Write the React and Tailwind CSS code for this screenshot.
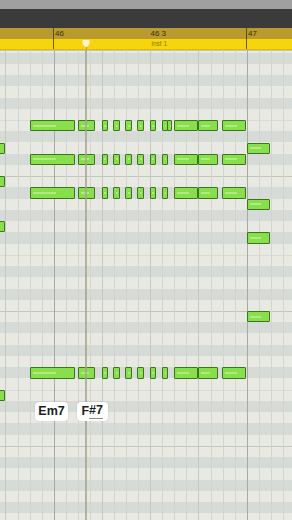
import React from "react";

const H = 11.24;
const rowTop = (n) => 396 - n * H;
const DARK = [1, 3, 6, 8, 10];

const rows = [];
for (let n = 36; n >= -6; n--) {
  const pc = (((n - 1) % 12) + 12) % 12;
  rows.push({ n, pc, first: n === 36 });
}

const cols = [];
for (let k = -4; k <= 19; k++) cols.push(k);

const common = [
  [29.5, 75],
  [78, 95],
  [101.5, 107.5],
  [113, 119.5],
  [125, 131.5],
  [137, 143.5],
  [149.5, 155.5],
  [162, 167.5],
  [173.5, 197.5],
  [197.5, 217.5],
  [222, 245.5],
];

const notes = [];
[29, 26, 23, 7].forEach((n) => {
  common.forEach(([a, b]) => notes.push({ n, a, b }));
});
notes.push({ n: 29, a: 167, b: 172 });
[27, 22, 19, 12].forEach((n) => notes.push({ n, a: 246.5, b: 270 }));
[27, 24, 20, 5].forEach((n) => notes.push({ n, a: -20, b: 5.3 }));

function Note({ n, a, b }) {
  const w = b - a;
  const lw = Math.max(1, (w - 2) * 0.55);
  return (
    <div
      className="absolute bg-[#88df4b] border border-[#3a7620] rounded-[1px]"
      style={{ left: a, top: rowTop(n), width: w, height: H }}
    >
      <div
        className="absolute top-1/2 -translate-y-1/2 h-px bg-[#d8f8b9]"
        style={{ left: w > 8 ? 2 : 1.5, width: lw }}
      />
    </div>
  );
}

export default function App() {
  return (
    <div className="w-[292px] h-[520px] overflow-hidden flex flex-col bg-[#e7e9e2] font-['Liberation_Sans',Arial,sans-serif]">
      <div className="h-[9px] bg-[#a0a0a0]" />
      <div className="h-[19px] bg-[#3b3b3b]" />
      <div className="h-[11px] bg-[#b89a2e] flex text-[8px] leading-none text-[#3a300a]">
        <div className="w-[53px] shrink-0" />
        <div className="w-[193px] shrink-0 border-l border-[#5e4d12] grid grid-cols-2 pt-[2px]">
          <span className="pl-[1px]">46</span>
          <span className="pl-[0.5px]">46 3</span>
        </div>
        <div className="flex-1 border-l border-[#5e4d12] pt-[2px] pl-[1px]">47</div>
      </div>
      <div className="h-[11px] bg-[#f7d50c] relative flex border-b border-[#d9b90a]">
        <div className="w-[53px] shrink-0" />
        <div className="w-[193px] shrink-0 border-l border-[#6b5a12] grid grid-cols-2 pt-[2px]">
          <span />
          <span className="pl-[1.5px] text-[6.5px] leading-none text-[#8c7608]">inst 1</span>
        </div>
        <div className="flex-1 border-l border-[#6b5a12]" />
        <svg className="absolute left-[82px] top-[1px]" width="8" height="8" viewBox="0 0 8 8">
          <path d="M0.5 1 Q0.5 0 1.5 0 H6.5 Q7.5 0 7.5 1 V4 L4 7.8 L0.5 4 Z" fill="#fff5cc" />
        </svg>
        <div className="absolute left-[85.5px] top-[8px] bottom-0 w-px bg-[#a89a5a]" />
      </div>
      <div className="flex-1 relative overflow-hidden">
        <div className="flex flex-col">
          {rows.map((r) => {
            const dark = DARK.includes(r.pc);
            const h = r.first ? "h-[2.6px]" : "h-[11.24px]";
            const bg = dark ? "bg-[#d7dbd8]" : "bg-[#e8e9e2]";
            const line =
              r.pc === 11
                ? "border-t border-[#c3c6c0]"
                : r.pc === 4
                ? "border-t border-[#d9dbd4]"
                : "";
            return <div key={r.n} className={`${h} ${bg} ${line} shrink-0`} />;
          })}
        </div>
        <div className="absolute inset-0 flex">
          <div className="w-[5.45px] shrink-0" />
          {cols.map((k) => {
            const cls =
              k % 16 === 0
                ? "border-l border-[#a7aaa3]"
                : k % 4 === 0
                ? "border-l border-[#c6c9c2]"
                : "border-l border-[#d2d5ce]";
            return <div key={k} className={`w-[12.0625px] shrink-0 ${cls}`} />;
          })}
        </div>
        {notes.map((nt, i) => (
          <Note key={i} {...nt} />
        ))}
        <div className="absolute left-[85px] top-0 bottom-0 w-[2px] bg-[#a9a28e]/80" />
        <div className="absolute left-[35px] top-[352px] flex gap-[8.5px]">
          <div className="w-[33px] h-[19px] rounded-[4px] bg-white shadow-[0_0_2px_rgba(0,0,0,0.15)] flex items-center justify-center text-[12.5px] font-bold text-[#1d1d1d] leading-none">
            Em7
          </div>
          <div className="w-[31.5px] h-[19px] rounded-[4px] bg-white shadow-[0_0_2px_rgba(0,0,0,0.15)] flex items-center justify-center text-[12.5px] font-bold text-[#1d1d1d] leading-none">
            <span>F</span>
            <span className="border-b border-[#8c8c8c] pb-px">#7</span>
          </div>
        </div>
      </div>
    </div>
  );
}
